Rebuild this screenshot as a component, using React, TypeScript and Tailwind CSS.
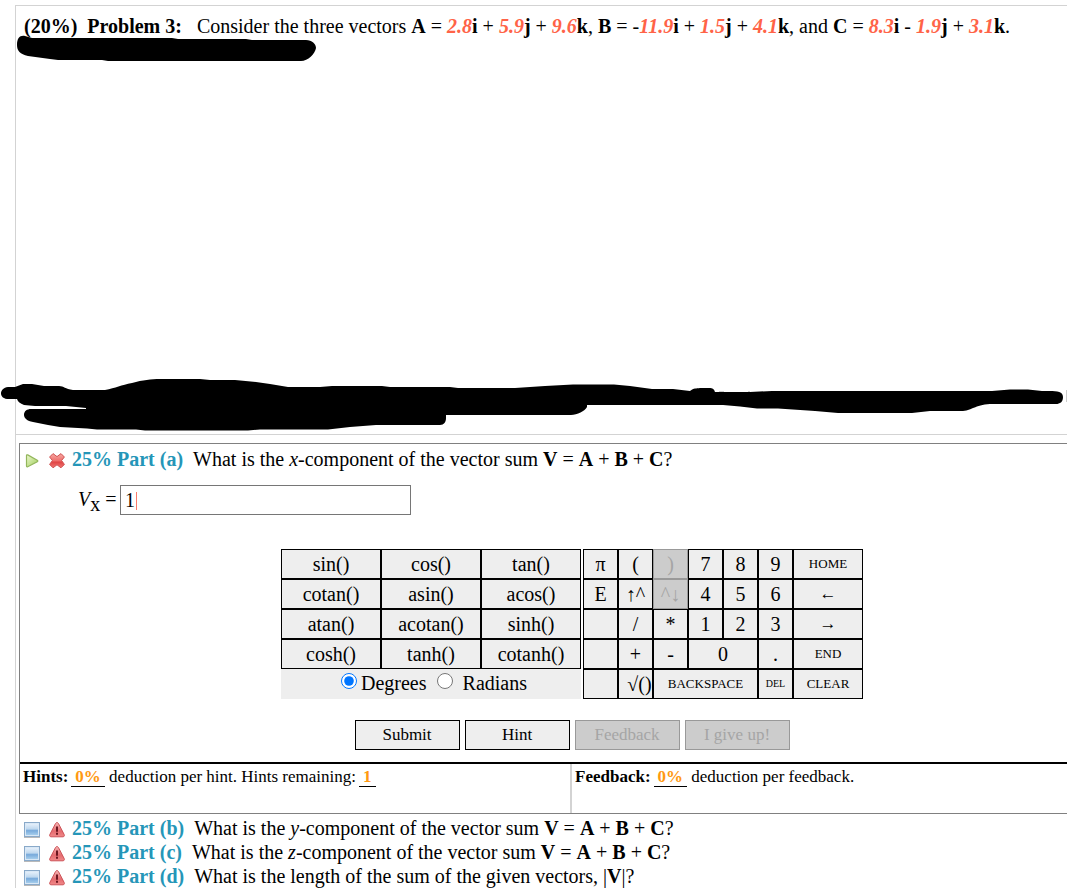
import clsx from 'clsx'
import { useState, type ReactNode } from 'react'

interface Key {
  label: string
  name?: string
  span?: string
  size?: string
  disabled?: boolean
}

const FUNCTIONS = [
  'sin()', 'cos()', 'tan()',
  'cotan()', 'asin()', 'acos()',
  'atan()', 'acotan()', 'sinh()',
  'cosh()', 'tanh()', 'cotanh()',
]

const KEYS: Key[] = [
  { label: 'π' },
  { label: '(' },
  { label: ')', disabled: true },
  { label: '7' },
  { label: '8' },
  { label: '9' },
  { label: 'HOME', span: 'col-span-2', size: 'text-[13px]' },
  { label: 'E' },
  { label: '↑^', name: 'Superscript' },
  { label: '^↓', name: 'Leave superscript', disabled: true },
  { label: '4' },
  { label: '5' },
  { label: '6' },
  { label: '←', name: 'Left', span: 'col-span-2', size: 'text-[17px]' },
  { label: '', name: 'Blank' },
  { label: '/' },
  { label: '*' },
  { label: '1' },
  { label: '2' },
  { label: '3' },
  { label: '→', name: 'Right', span: 'col-span-2', size: 'text-[17px]' },
  { label: '', name: 'Blank' },
  { label: '+' },
  { label: '-' },
  { label: '0', span: 'col-span-2' },
  { label: '.' },
  { label: 'END', span: 'col-span-2', size: 'text-[13px]' },
  { label: '', name: 'Blank' },
  { label: '√()', size: 'text-xl pl-2' },
  { label: 'BACKSPACE', span: 'col-span-3', size: 'text-[13px]' },
  { label: 'DEL', size: 'text-[10px]' },
  { label: 'CLEAR', span: 'col-span-2', size: 'text-[13px]' },
]

function PlayIcon() {
  return (
    <svg width="16" height="16" viewBox="0 0 16 16" aria-hidden="true">
      <defs>
        <linearGradient id="play" x1="0" y1="0" x2="1" y2="1">
          <stop offset="0" stopColor="#eef8d0" />
          <stop offset="1" stopColor="#9fce5b" />
        </linearGradient>
      </defs>
      <path
        d="M2.5 2.6v10.400c0 .7.6 1 1.2.7l9.600-4.900c.7-.4.7-1.200 0-1.600L3.700 1.900c-.6-.3-1.200 0-1.200.7z"
        fill="url(#play)"
        stroke="#93b65c"
        strokeWidth="1.200"
      />
    </svg>
  )
}

function WrongIcon() {
  return (
    <svg width="16" height="16" viewBox="0 0 16 16" aria-hidden="true">
      <defs>
        <linearGradient id="wrong" x1="0" y1="0" x2="0" y2="1">
          <stop offset="0" stopColor="#f7a9a4" />
          <stop offset="0.5" stopColor="#ee706d" />
          <stop offset="0.6" stopColor="#e04545" />
          <stop offset="1" stopColor="#f17773" />
        </linearGradient>
      </defs>
      <path
        d="M4 .6 8 3.600 12 .6 15.400 4 12.600 7.500l2.800 3.900L12 14.800 8 11.800l-4 3L.6 11.400l2.800-3.900L.6 4z"
        fill="url(#wrong)"
        stroke="#cf5353"
        strokeLinejoin="round"
      />
    </svg>
  )
}

function SquareIcon() {
  return (
    <svg width="16" height="16" viewBox="0 0 16 16" aria-hidden="true">
      <defs>
        <linearGradient id="square" x1="0" y1="0" x2="0" y2="1">
          <stop offset="0" stopColor="#e4effa" />
          <stop offset="0.45" stopColor="#bfd8ef" />
          <stop offset="0.6" stopColor="#78aadb" />
          <stop offset="1" stopColor="#a5cdec" />
        </linearGradient>
      </defs>
      <rect x="0.5" y="0.5" width="15" height="14" fill="#d9e8f6" stroke="#89a9c9" />
      <rect x="2" y="2" width="12" height="11" fill="url(#square)" />
      <path d="M0 15.5h16" stroke="#b9b9b9" />
    </svg>
  )
}

function WarningIcon() {
  return (
    <svg width="16" height="16" viewBox="0 0 16 16" aria-hidden="true">
      <defs>
        <linearGradient id="warning" x1="0" y1="0" x2="0" y2="1">
          <stop offset="0" stopColor="#f5b5b5" />
          <stop offset="0.6" stopColor="#e56b6f" />
          <stop offset="1" stopColor="#f08a8a" />
        </linearGradient>
      </defs>
      <path
        d="M6.6 1.400c.6-1.100 2.200-1.100 2.800 0l5.800 11.200c.5 1 0 2.200-1.200 2.200H2c-1.200 0-1.700-1.200-1.200-2.200z"
        fill="url(#warning)"
        stroke="#cc5257"
      />
      <path d="M7 4.500h2v5.300H7z" fill="#6b1720" />
      <path d="M7 10.800h2v2H7z" fill="#6b1720" />
    </svg>
  )
}

// Marker strokes that black out the student details above the parts
function Redactions() {
  return (
    <svg
      className="pointer-events-none absolute top-0 left-0"
      width="1067"
      height="440"
      viewBox="0 0 1067 440"
      aria-hidden="true"
    >
      <path d="M719 391.500h5m24 0h2m54 0h6m25 0h3m11 0h3m12 0h3m15 0h4m30 0h3" stroke="#ccc" />
      <path d="M1066.500 390v12" stroke="#ccc" />
      <path d="M17 45C17 38 20 35 25 36L32 38L172 38L178 39L246 39L252 40H306C312 40 316 44 316 48C315 54 308 61 301 61H108L102 60H58L50 59L28 56C20 54 17 51 17 45Z" />
      <path d="M8 387H15L23 384H32L44 386H59C64 386 65 389 73 390L105 390C116 388 121 385 132 383C143 380 151 379 160 379H200L210 380H235L256 382L270 384L288 387H320L332 386H382L390 387H450L458 388H515L545 386L573 384.500H614L630 386L652 389H673L690 391C694 388 696 388.500 700 388H709C713 388 714 389 715 392H750L772 391H992L1010 389.500H1028L1042 391C1054 391 1063 390 1063 397C1063 402 1060 404 1056 404H993C976 404 973 410 963 411H930L912 413H838L815 411L778 408.500H757L740 406.500L723 405H587V407C585 411 577 415 571 415H446V418C446 422 444 425 440 425H376L350 427L328 429.500H260L248 430.500H145L136 429.500H97L87 428.500L60 427L48 425L33 422C27 421 24 418 24 415C24 411 27 409 31 409H86V408L66 406H35L24 405C20 403 18 402 17 399H9C-2 399-1 388 8 387Z" />
    </svg>
  )
}

function Value({ children }: { children: ReactNode }) {
  return <i className="font-bold text-[#ff6347]">{children}</i>
}

function VectorSum() {
  return (
    <>
      <b>V</b> = <b>A</b> + <b>B</b> + <b>C</b>?
    </>
  )
}

interface PartRowProps {
  part: string
  icons: ReactNode
  children: ReactNode
}

function PartRow({ part, icons, children }: PartRowProps) {
  return (
    <div className="flex h-6 items-center text-xl leading-6 whitespace-nowrap">
      <span className="mr-[7px] flex gap-[9px] pt-1">{icons}</span>
      <b className="mr-2.5 text-[#2596b8]">25% Part ({part})</b>
      <span>{children}</span>
    </div>
  )
}

function Amount({ children }: { children: ReactNode }) {
  return (
    <b className="ml-[3px] inline-block border-b border-black px-1 leading-[18px] text-[#ff9912]">
      {children}
    </b>
  )
}

interface PadButtonProps {
  className?: string
  disabled?: boolean
  name?: string
  onClick?: () => void
  children?: ReactNode
}

function PadButton({ className, disabled, name, onClick, children }: PadButtonProps) {
  return (
    <button
      type="button"
      disabled={disabled}
      aria-label={name}
      onClick={onClick}
      className={clsx(
        'flex h-[30px] items-center justify-center border whitespace-nowrap',
        disabled
          ? 'border-[#999] bg-[#ccc] text-[#a5a5a5]'
          : 'border-black bg-[#eee] text-black',
        className,
      )}
    >
      {children}
    </button>
  )
}

export default function App() {
  const [answer, setAnswer] = useState('1')
  const [unit, setUnit] = useState('degrees')

  return (
    <div className="relative min-h-screen overflow-hidden bg-white pt-[5px] pl-[15px] font-['Liberation_Serif','Times_New_Roman',serif] text-black">
      <main className="-mr-[58px] border-t border-l border-[#d3d3d3]">
        <section className="h-[429px] border-b border-[#d3d3d3] pt-2 pl-2 text-xl leading-6 whitespace-nowrap">
          <b className="mr-[15px] whitespace-pre">(20%)  Problem 3:</b>
          Consider the three vectors <b>A</b> = <Value>2.8</Value>
          <b>i</b> + <Value>5.9</Value>
          <b>j</b> + <Value>9.6</Value>
          <b>k</b>, <b>B</b> = -<Value>11.9</Value>
          <b>i</b> + <Value>1.5</Value>
          <b>j</b> + <Value>4.1</Value>
          <b>k</b>, and <b>C</b> = <Value>8.3</Value>
          <b>i</b> - <Value>1.9</Value>
          <b>j</b> + <Value>3.1</Value>
          <b>k</b>.
        </section>

        <div className="pt-2 pl-[3px]">
          <section className="border border-[#808080]">
            <div className="pt-[3px] pl-1">
              <PartRow part="a" icons={<><PlayIcon /><WrongIcon /></>}>
                What is the <i>x</i>-component of the vector sum <VectorSum />
              </PartRow>
            </div>

            <div className="mt-3.5 flex pl-[58px] text-xl">
              <label htmlFor="answer" className="w-[42px] leading-6 whitespace-nowrap">
                <i>V</i>
                <sub className="text-xl">x</sub> =
              </label>
              <div className="relative">
                <input
                  id="answer"
                  value={answer}
                  onChange={(e) => setAnswer(e.target.value)}
                  className="h-[30px] w-[291px] border border-[#767676] px-1 caret-[#fb5b43] outline-none"
                />
                <span className="absolute top-[7px] left-4 h-[18px] w-px bg-[#fb7b6b]" />
              </div>
            </div>

            <div className="mt-[34px] flex justify-center gap-0.5 text-xl">
              <div>
                <div className="grid grid-cols-[repeat(3,100px)]">
                  {FUNCTIONS.map((fn) => (
                    <PadButton key={fn} onClick={() => setAnswer(answer + fn)}>
                      {fn}
                    </PadButton>
                  ))}
                </div>
                <div className="flex h-[30px] items-center justify-center bg-[#eee] pb-0.5 pl-1.5 leading-6">
                  <input
                    id="degrees"
                    type="radio"
                    name="unit"
                    checked={unit === 'degrees'}
                    onChange={() => setUnit('degrees')}
                    className="mr-1 mb-1 h-4 w-4"
                  />
                  <label htmlFor="degrees">Degrees</label>
                  <input
                    id="radians"
                    type="radio"
                    name="unit"
                    checked={unit === 'radians'}
                    onChange={() => setUnit('radians')}
                    className="mr-2.5 mb-1 ml-2.5 h-4 w-4"
                  />
                  <label htmlFor="radians">Radians</label>
                </div>
              </div>
              <div className="grid grid-cols-[repeat(8,35px)]">
                {KEYS.map((key, i) => (
                  <PadButton
                    key={i}
                    name={key.name}
                    disabled={key.disabled}
                    className={clsx(key.span, key.size)}
                  >
                    {key.label}
                  </PadButton>
                ))}
              </div>
            </div>

            <div className="mt-[21px] flex justify-center gap-[5px] text-[17px]">
              <PadButton className="w-[105px]">Submit</PadButton>
              <PadButton className="w-[105px]">Hint</PadButton>
              <PadButton className="w-[105px]" disabled>Feedback</PadButton>
              <PadButton className="w-[105px]" disabled>I give up!</PadButton>
            </div>

            <div className="mt-3 grid h-[51px] grid-cols-2 border-t-2 border-black text-[17px] leading-5">
              <p className="border-r-2 border-[#d3d3d3] pt-[3px] pl-[3px]">
                <b>Hints:</b>
                <Amount>0%</Amount> deduction per hint. Hints remaining:
                <Amount>1</Amount>
              </p>
              <p className="pt-[3px] pl-[3px]">
                <b>Feedback:</b>
                <Amount>0%</Amount> deduction per feedback.
              </p>
            </div>
          </section>

          <section className="pt-0.5 pl-[5px]">
            <PartRow part="b" icons={<><SquareIcon /><WarningIcon /></>}>
              What is the <i>y</i>-component of the vector sum <VectorSum />
            </PartRow>
            <PartRow part="c" icons={<><SquareIcon /><WarningIcon /></>}>
              What is the <i>z</i>-component of the vector sum <VectorSum />
            </PartRow>
            <PartRow part="d" icons={<><SquareIcon /><WarningIcon /></>}>
              What is the length of the sum of the given vectors, |<b>V</b>|?
            </PartRow>
          </section>
        </div>
      </main>
      <Redactions />
    </div>
  )
}
